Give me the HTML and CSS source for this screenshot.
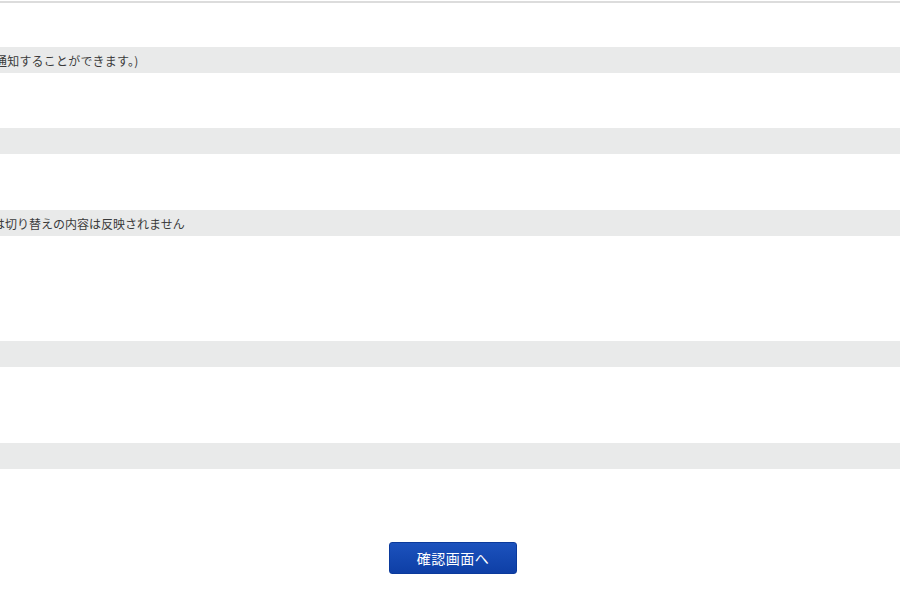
FILE: index.html
```html
<!DOCTYPE html>
<html lang="ja">
<head>
<meta charset="utf-8">
<title>設定</title>
<link rel="stylesheet" href="styles.css">
</head>
<body>
<div class="page">
  <div class="top-rule"></div>
  <div class="body body-1"></div>
  <div class="band"><span class="note note-a">通知することができます。)</span></div>
  <div class="body body-2"></div>
  <div class="band"></div>
  <div class="body body-3"></div>
  <div class="band"><span class="note note-b">は切り替えの内容は反映されません</span></div>
  <div class="body body-4"></div>
  <div class="band"></div>
  <div class="body body-5"></div>
  <div class="band"></div>
  <div class="actions">
    <button class="confirm" type="button">確認画面へ</button>
  </div>
</div>
</body>
</html>
```

FILE: styles.css
```css
html, body {
  margin: 0;
  padding: 0;
  background: #ffffff;
}
body {
  font-family: "Noto Sans CJK JP", "Noto Sans", sans-serif;
  color: #333333;
  overflow: hidden;
}
.page {
  width: 900px;
  padding-top: 1px;
}
.top-rule {
  height: 2px;
  background: #dcdcdc;
}
.body-1 { height: 44px; }
.body-2 { height: 55px; }
.body-3 { height: 56px; }
.body-4 { height: 105px; }
.body-5 { height: 76px; }
.band {
  height: 26px;
  background: #e9eaea;
  display: flex;
  align-items: center;
  overflow: hidden;
}
.note {
  font-size: 12px;
  line-height: 16px;
  color: #3a3a3a;
  white-space: nowrap;
  padding-top: 1px;
}
.note-a {
  margin-left: -5px;
  letter-spacing: 0.2px;
}
.note-b {
  margin-left: -7px;
}
.actions {
  display: flex;
  justify-content: center;
  padding-top: 73px;
  padding-left: 6px;
}
.confirm {
  width: 128px;
  height: 32px;
  border: 1px solid #0b3a9c;
  border-radius: 3px;
  background: linear-gradient(#1c52bd, #0e3fa6);
  color: #ffffff;
  font-family: "Noto Sans CJK JP", sans-serif;
  font-size: 14px;
  padding: 0;
  letter-spacing: 0.5px;
}
```
